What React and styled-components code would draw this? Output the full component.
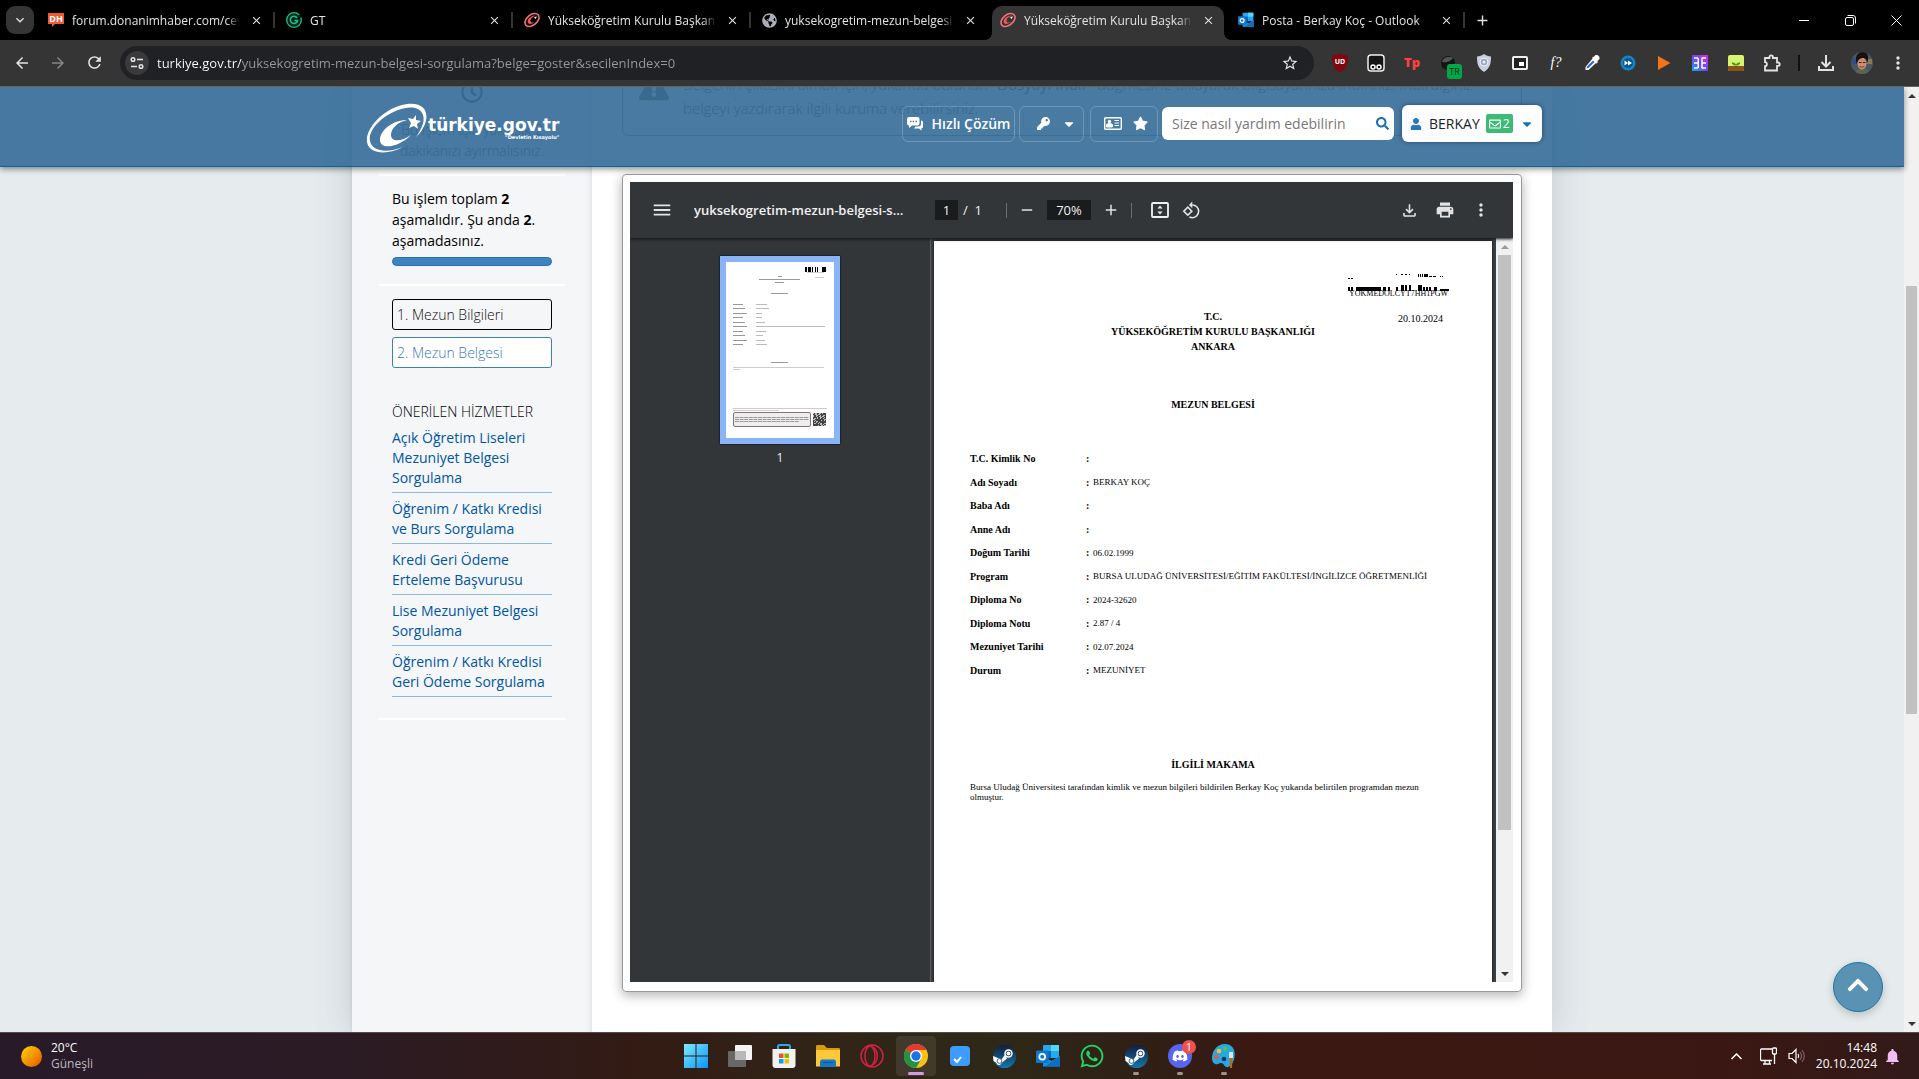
import React from "react";
import styled, { createGlobalStyle, css } from "styled-components";
import {
  FaWhatsapp, FaDiscord, FaKey, FaStar, FaSearch, FaUser, FaCaretDown,
  FaChevronUp, FaRegClock, FaExclamationTriangle, FaRegEnvelope, FaGlobeAmericas,
} from "react-icons/fa";
import {
  MdMenu, MdPrint, MdMoreVert, MdRotate90DegreesCcw, MdArrowBack, MdArrowForward, MdRefresh,
  MdStarBorder, MdOutlineFileDownload, MdAdd, MdRemove, MdClose, MdExpandMore, MdNotifications,
} from "react-icons/md";

const Global = createGlobalStyle`
  * { box-sizing: border-box; }
  html, body, #root { height: 100%; margin: 0; }
  body { overflow: hidden; font-family: "Open Sans", "Noto Sans", sans-serif; color: #000; }
  button, input { font: inherit; color: inherit; margin: 0; }
  button { border: 0; padding: 0; background: none; cursor: pointer; }
  a { text-decoration: none; }
  svg { display: block; flex: none; }
  h1, h2, p, ul, dl, dd, dt { margin: 0; padding: 0; font-weight: inherit; }
  ul { list-style: none; }
`;

const Screen = styled.div`
  display: flex;
  flex-direction: column;
  height: 100vh;
  overflow: hidden;
`;

const IconButton = styled.button`
  display: flex;
  align-items: center;
  justify-content: center;
  flex: none;
  width: ${(p) => p.$w || 36}px;
  height: ${(p) => p.$h || 34}px;
  color: ${(p) => p.$color || "#e3e3e3"};
`;

/* ---------- browser tab strip ---------- */

const TabStrip = styled.header`
  display: flex;
  flex: none;
  height: 40px;
  padding-left: 6px;
  background: #000;
  color: #e3e3e3;
  font-size: 12px;
`;

const TabSearch = styled.button`
  display: flex;
  align-items: center;
  justify-content: center;
  width: 28px;
  height: 28px;
  margin: 6px 2px 0 0;
  border-radius: 9px;
  background: #353535;
`;

const Tab = styled.div`
  position: relative;
  width: 238px;
  padding: 6px 2px 0 4px;
  ${(p) => p.$line && css`
    &::after {
      content: "";
      position: absolute;
      right: -1px;
      top: 12px;
      width: 2px;
      height: 16px;
      background: #353535;
    }
  `}
`;

const TabInner = styled.div`
  position: relative;
  display: flex;
  align-items: center;
  gap: 8px;
  height: 34px;
  padding: 0 8px 6px;
  border-radius: 10px 10px 0 0;
  ${(p) => p.$active && css`
    background: #353535;
    &::before, &::after {
      content: "";
      position: absolute;
      bottom: 0;
      width: 8px;
      height: 8px;
    }
    &::before { left: -8px; background: radial-gradient(circle at 0 0, transparent 8px, #353535 8px); }
    &::after { right: -8px; background: radial-gradient(circle at 100% 0, transparent 8px, #353535 8px); }
  `}
`;

const TabTitle = styled.button`
  flex: 1;
  min-width: 0;
  overflow: hidden;
  white-space: nowrap;
  text-align: left;
  mask-image: linear-gradient(90deg, #000 92%, transparent);
`;

const NewTab = styled(IconButton)`
  margin-top: -1px;
`;

const WindowButtons = styled.div`
  display: flex;
  margin-left: auto;
`;

/* ---------- browser toolbar ---------- */

const BrowserBar = styled.div`
  display: flex;
  align-items: center;
  flex: none;
  height: 47px;
  padding: 0 3px 1px 4px;
  background: #353535;
  border-bottom: 1px solid #6b6257;
`;

const Address = styled.div`
  display: flex;
  align-items: center;
  flex: 1;
  height: 34px;
  margin: 0 8px 0 8px;
  padding-left: 5px;
  border-radius: 17px;
  background: #202124;
`;

const SiteInfo = styled.button`
  display: flex;
  align-items: center;
  justify-content: center;
  width: 24px;
  height: 24px;
  border-radius: 12px;
  background: #3a3a3c;
`;

const AddressInput = styled.input`
  flex: 1;
  min-width: 0;
  margin-left: 8px;
  padding: 0;
  border: 0;
  outline: 0;
  font-size: 13px;
  color: transparent;
  background: linear-gradient(90deg, #fff 85px, #9a9a9a 85px);
  background-clip: text;
  -webkit-background-clip: text;
`;

const BarDivider = styled.span`
  width: 2px;
  height: 16px;
  margin: 0 8px;
  background: #111;
`;

const Avatar = styled.span`
  width: 22px;
  height: 22px;
  border-radius: 11px;
  overflow: hidden;
`;

/* ---------- page ---------- */

const Viewport = styled.div`
  position: relative;
  display: flex;
  flex: 1;
  min-height: 0;
  overflow: hidden;
  background: #e6ebee;
`;

const PageArea = styled.div`
  position: relative;
  flex: 1;
  min-width: 0;
`;

const Scrollbar = styled.div`
  display: flex;
  flex-direction: column;
  flex: none;
  width: ${(p) => p.$w}px;
  background: #f1f1f1;
`;

const ScrollArrow = styled.button`
  display: flex;
  align-items: center;
  justify-content: center;
  height: 17px;
`;

const ScrollTrack = styled.div`
  display: flex;
  flex-direction: column;
  flex: 1;
  padding: 0 2px;
`;

const ScrollThumb = styled.div`
  height: ${(p) => p.$size}%;
  background: #c1c1c1;
`;

const ScrollGap = styled.div`
  height: ${(p) => p.$size}%;
`;

const SiteHeader = styled.header`
  position: absolute;
  z-index: 2;
  inset: 0 0 auto 0;
  height: 80px;
  background: rgba(52, 107, 152, 0.9);
  border-bottom: 1px solid #0a64a0;
  box-shadow: 0 2px 6px rgba(0, 0, 0, 0.45);
`;

const HeaderInner = styled.div`
  display: flex;
  align-items: center;
  justify-content: space-between;
  width: 1200px;
  max-width: 100%;
  height: 73px;
  margin: 0 auto;
  padding: 0 10px 0 13px;
`;

const Brand = styled.a`
  display: flex;
  align-items: center;
  padding-top: 8px;
  color: #fff;
`;

const BrandText = styled.span`
  display: flex;
  flex-direction: column;
  align-items: flex-end;
  font-family: "DejaVu Sans", sans-serif;
  font-weight: bold;
  font-size: 17px;
  line-height: 18px;
`;

const BrandNote = styled.span`
  font-size: 5px;
  line-height: 6px;
`;

const HeaderTools = styled.div`
  display: flex;
  align-items: center;
`;

const ToolButton = styled.button`
  display: flex;
  align-items: center;
  justify-content: center;
  gap: ${(p) => p.$gap}px;
  width: ${(p) => p.$w}px;
  height: 36px;
  margin-right: ${(p) => p.$after}px;
  padding-left: ${(p) => p.$shift || 0}px;
  border: 1px solid rgba(255, 255, 255, 0.22);
  border-radius: 6px;
  color: #fff;
  font-size: 14px;
  font-weight: 600;
`;

const SearchBox = styled.form`
  display: flex;
  align-items: center;
  width: 232px;
  height: 33px;
  margin-right: 8px;
  padding: 0 5px 0 10px;
  border-radius: 6px;
  background: #fff;
`;

const SearchInput = styled.input`
  flex: 1;
  min-width: 0;
  padding: 0;
  border: 0;
  outline: 0;
  background: none;
  font-size: 14px;
  &::placeholder { color: #777; opacity: 1; }
`;

const UserButton = styled.button`
  display: flex;
  align-items: center;
  width: 140px;
  height: 37px;
  padding: 0 8px 0 8px;
  border-radius: 6px;
  background: #fcfdff;
  box-shadow: 0 0 4px rgba(0, 30, 70, 0.6);
  font-size: 14px;
  color: #222;
  & > :last-child { margin-left: auto; }
`;

const UserName = styled.span`
  margin: 0 6px 0 7px;
`;

const MailBadge = styled.span`
  display: flex;
  align-items: center;
  gap: 2px;
  height: 19px;
  padding: 0 3px;
  border-radius: 2px;
  background: #3dbb76;
  color: #fff;
  font-size: 12px;
`;

const Container = styled.div`
  display: flex;
  width: 1200px;
  max-width: 100%;
  height: 100%;
  margin: 0 auto;
  box-shadow: 0 0 36px rgba(70, 90, 105, 0.22);
`;

const Side = styled.aside`
  width: 240px;
  flex: none;
  padding: 0 27px;
  background: #f4f6f8;
  box-shadow: inset -8px 0 8px -8px rgba(0, 0, 0, 0.12), 0 0 4px rgba(0, 0, 0, 0.1);
  font-size: 14px;
  line-height: 21px;
`;

const SideSection = styled.section`
  padding: ${(p) => p.$pad};
  border-bottom: 2px solid #fff;
`;

const Duration = styled(SideSection)`
  display: flex;
  flex-direction: column;
  align-items: center;
  gap: 16px;
  height: 89px;
  color: #333;
  text-align: center;
  font-weight: 300;
  & > svg { margin-top: -6px; }
`;

const Progress = styled.div`
  height: 9px;
  margin-top: 6px;
  border: 1px solid #1f74b6;
  border-radius: 5px;
  background: #4083be;
`;

const StepLink = styled.a`
  display: block;
  height: 31px;
  margin-bottom: 7px;
  padding: 0 4px;
  border: 1px solid ${(p) => (p.$current ? "#3b82bd" : "#000")};
  border-radius: 3px;
  background: ${(p) => (p.$current ? "#fff" : "transparent")};
  color: ${(p) => (p.$current ? "#3b78bd" : "#111")};
  line-height: 30px;
`;

const StepText = styled.span`
  font-weight: 300;
`;

const SideHeading = styled.h2`
  margin-top: 33px;
  padding-bottom: 6px;
  font-size: 14px;
  font-weight: 300;
`;

const Suggestion = styled.a`
  display: block;
  margin-bottom: 6px;
  padding-bottom: 4px;
  border-bottom: 1px solid #8db8dd;
  color: #0055a3;
  line-height: 20px;
`;

const Main = styled.main`
  flex: 1;
  min-width: 0;
  padding: 0 30px;
  background: #fff;
`;

const Notice = styled.div`
  display: flex;
  gap: 14px;
  height: 65px;
  margin-top: -16px;
  padding: 0 16px;
  border: 1px solid #8b8b86;
  border-radius: 6px;
  color: #333;
  font-size: 15px;
  font-weight: 300;
  line-height: 24px;
`;

const Viewer = styled.div`
  margin-top: 38px;
  height: 818px;
  padding: 7px 8px 8px 7px;
  border: 1px solid #9b9b9b;
  border-radius: 4px;
  box-shadow: 0 3px 12px rgba(0, 0, 0, 0.32);
`;

const Pdf = styled.div`
  display: flex;
  flex-direction: column;
  height: 800px;
  overflow: hidden;
  background: #323639;
  color: #f1f1f1;
`;

const PdfBar = styled.div`
  position: relative;
  z-index: 1;
  display: flex;
  align-items: center;
  flex: none;
  height: 56px;
  padding: 0 14px;
  box-shadow: 0 1px 3px #111;
  font-size: 13px;
`;

const PdfTitle = styled.h1`
  width: 215px;
  margin: 0 26px 0 14px;
  overflow: hidden;
  white-space: nowrap;
  text-overflow: ellipsis;
  font-size: 13px;
  font-weight: 600;
`;

const PdfField = styled.input`
  width: ${(p) => p.$w}px;
  height: 20px;
  padding: 0;
  border: 0;
  background: #191b1c;
  text-align: center;
`;

const PageCount = styled.span`
  margin: 0 24px 0 5px;
  white-space: pre;
`;

const PdfDivider = styled.span`
  width: 1px;
  height: 15px;
  background: #6b6e70;
`;

const ViewTools = styled.div`
  display: flex;
  gap: 14px;
  margin-left: 19px;
`;

const PdfRight = styled.div`
  display: flex;
  margin-left: auto;
`;

const PdfBody = styled.div`
  display: flex;
  flex: 1;
  min-height: 0;
`;

const Thumbs = styled.nav`
  display: flex;
  flex-direction: column;
  align-items: center;
  width: 300px;
  flex: none;
  padding-top: 18px;
  font-size: 12px;
  line-height: 16px;
`;

const Thumb = styled.button`
  padding: 6px;
  margin-bottom: 6px;
  background: #8ab4f8;
  box-shadow: 0 0 2px #000;
`;

const DocArea = styled.div`
  display: flex;
  flex: 1;
  min-width: 0;
  padding: 3px 4px 0 3px;
  border-left: 1px solid #5a5e61;
  background: #3d4246;
`;

const Sheet = styled.article`
  flex: 1;
  min-width: 0;
  padding: 33px 43px 0 36px;
  background: #fff;
  box-shadow: 0 0 3px #0b0d14;
  color: #000;
  font-family: "Liberation Serif", serif;
  font-size: 9px;
`;

const DocHead = styled.div`
  display: grid;
  grid-template-columns: 1fr auto 1fr;
  padding-left: 7px;
`;

const DocTitle = styled.h2`
  grid-column: 2;
  margin-top: ${(p) => p.$top}px;
  font-size: 10px;
  font-weight: bold;
  line-height: 15px;
  text-align: center;
`;

const CodeBlock = styled.div`
  display: flex;
  flex-direction: column;
  justify-self: end;
  align-items: center;
  line-height: 10px;
`;

const Code = styled.span`
  margin-top: -2px;
  font-size: 8px;
`;

const DocDate = styled.span`
  align-self: flex-end;
  margin: 15px 6px 0 0;
  font-size: 10px;
`;

const Centered = styled.div`
  padding-left: 7px;
`;

const Facts = styled.dl`
  display: grid;
  grid-auto-rows: 1fr;
  height: 235px;
  margin-top: 35px;
`;

const Fact = styled.div`
  display: grid;
  grid-template-columns: 116px 7px 1fr;
  align-items: center;
  white-space: nowrap;
  & dt, & b { font-size: 10px; font-weight: bold; }
`;

const Statement = styled.p`
  margin-top: 10px;
  line-height: 10px;
`;

const ToTop = styled.button`
  position: absolute;
  z-index: 3;
  right: 21px;
  bottom: 20px;
  display: flex;
  align-items: center;
  justify-content: center;
  width: 50px;
  height: 50px;
  padding-bottom: 4px;
  border: 1px solid #1878a5;
  border-radius: 25px;
  background: #5a92b4;
  box-shadow: 0 3px 8px rgba(0, 0, 0, 0.2);
  color: #fff;
`;

/* ---------- taskbar ---------- */

const Taskbar = styled.footer`
  display: grid;
  grid-template-columns: 1fr auto 1fr;
  align-items: center;
  flex: none;
  height: 47px;
  padding-left: 1px;
  border-top: 1px solid #554a4a;
  background: linear-gradient(90deg, #281a29 0%, #2b1b24 18%, #331b14 33%, #302517 44%, #2e2818 52%, #301f15 60%, #3b1812 66%, #3a1712 90%, #321a1a 100%);
  color: #fff;
  font-size: 12px;
  line-height: 16px;
`;

const Weather = styled.button`
  display: flex;
  align-items: center;
  gap: 9px;
  justify-self: start;
  padding-left: 20px;
  text-align: left;
`;

const Sun = styled.span`
  width: 21px;
  height: 21px;
  border-radius: 11px;
  background: linear-gradient(135deg, #ffd400, #f08a00 60%, #dd5500);
`;

const Stack = styled.span`
  display: flex;
  flex-direction: column;
`;

const Muted = styled.span`
  color: #bdb8bd;
`;

const Apps = styled.div`
  display: flex;
  gap: 4px;
`;

const AppButton = styled.button`
  position: relative;
  display: flex;
  align-items: center;
  justify-content: center;
  width: 40px;
  height: 40px;
  border-radius: 4px;
  background: ${(p) => (p.$mark === "active" ? "rgba(255,255,255,0.09)" : "none")};
  ${(p) => p.$mark && css`
    &::after {
      content: "";
      position: absolute;
      bottom: 1px;
      width: ${p.$mark === "active" ? 16 : 6}px;
      height: 3px;
      border-radius: 2px;
      background: ${p.$mark === "active" ? "#d79be6" : "#9d9690"};
    }
  `}
`;

const Count = styled.span`
  position: absolute;
  top: 4px;
  right: 4px;
  width: 14px;
  height: 14px;
  border-radius: 7px;
  background: #f0504f;
  font-size: 11px;
  line-height: 14px;
`;

const Tray = styled.div`
  display: flex;
  align-items: center;
  justify-self: end;
  padding-right: 18px;
`;

const Clock = styled.button`
  display: flex;
  flex-direction: column;
  align-items: flex-end;
  margin: 0 7px 0 11px;
`;

/* ---------- drawings ---------- */

const Crescent = ({ size = 16 }) => (
  <svg width={size} height={size} viewBox="0 0 16 16">
    <ellipse cx="8" cy="8" rx="8" ry="5.2" transform="rotate(-40 8 8)" fill="none" stroke="#f0747a" strokeWidth="1.6" />
    <path d="M12 3.6C8 3 4 6.500 3.600 9.500c-.3 3 4 3.200 7.400.6-3 .9-4.900.2-4.500-1.700.4-2 2.500-4 5.500-4.800z" fill="#f5555d" />
    <path d="M10 5l3-.5-1.600 2.500z" fill="#fff" />
  </svg>
);

const DhIcon = () => (
  <svg width="16" height="16" viewBox="0 0 16 16">
    <path d="M0 1h16v11h-9l-3 3v-3H0z" fill="#ee5a36" />
    <text x="8" y="10" fontSize="9" fontWeight="bold" textAnchor="middle" fill="#fff">DH</text>
  </svg>
);

const GIcon = () => (
  <svg width="16" height="16" viewBox="0 0 16 16">
    <circle cx="8" cy="8" r="7.300" fill="#04231b" stroke="#12c48b" strokeWidth="1.300" strokeDasharray="40 3" />
    <path d="M11 6A3.600 3.600 0 1 0 11.500 8.500H8.500" fill="none" stroke="#12c48b" strokeWidth="1.600" />
  </svg>
);

const OutlookIcon = ({ size = 16 }) => (
  <svg width={size} height={size} viewBox="0 0 24 24">
    <rect x="7" y="1" width="16" height="13" rx="1" fill="#28a8ea" />
    <path d="M15 1h8v6h-8z" fill="#50d9ff" />
    <path d="M7 7h8v7H7z" fill="#0364b8" />
    <path d="M7 12l8.500 5 8.500-5v10.500H7z" fill="#1490df" />
    <path d="M24 12v10.500H9z" fill="#0f6fc0" />
    <rect x="0" y="6.500" width="12.500" height="12.500" rx="1" fill="#0f78d4" />
    <circle cx="6.200" cy="12.700" r="2.900" fill="none" stroke="#fff" strokeWidth="1.800" />
  </svg>
);

const Logo = () => (
  <svg width="63" height="50" viewBox="0 0 63 50">
    <path fillRule="evenodd" d="M38 44C24 52 4 52 2 39 0 25 20 4 42 1c18-2 22 9 18 20-3 7-6 10-9 13 6-9 9-16 7-22C55 3 44 3 33 7 15 14 3 28 5 38c2 11 18 12 33 6z" fill="#fff" />
    <path d="M42 17c-14 0-27 10-27 20 0 10 18 8 31-5-10 7-20 7-20 0s7-13 16-15z" fill="#fff" />
    <path d="M43 15l5 1 3-4v5l5 1-4 3 1 5-4-3-5 2 2-5z" fill="#fff" />
  </svg>
);

const extensionIcons = [
  ["uBlock", <svg width="18" height="20" viewBox="0 0 18 20"><path d="M9 0c3 2 5 2.500 8 2.500 0 9-1 13-8 17-7-4-8-8-8-17C4 2.500 6 2 9 0z" fill="#800610" /><text x="9" y="11" fontSize="7" fontWeight="bold" textAnchor="middle" fill="#fff">UD</text></svg>],
  ["Tampermonkey", <svg width="18" height="18" viewBox="0 0 18 18"><rect x="1" y="1" width="16" height="16" rx="3" fill="#151515" stroke="#eee" strokeWidth="1.500" /><circle cx="6" cy="13" r="2" fill="none" stroke="#fff" strokeWidth="1.500" /><circle cx="12" cy="13" r="2" fill="none" stroke="#fff" strokeWidth="1.500" /></svg>],
  ["TP", <svg width="18" height="18" viewBox="0 0 18 18"><text x="9" y="13" fontSize="13" fontWeight="800" textAnchor="middle" fill="#ff4040">Tp</text></svg>],
  ["TR", <svg width="34" height="32" viewBox="-8 -8 34 32"><circle cx="9" cy="8" r="7" fill="#141414" /><path d="M3 7a7 6 0 0 1 11-4c-3 4-7 5-11 4z" fill="#555" /><rect x="8" y="9" width="15" height="15" rx="3" fill="#00a848" /><text x="15.500" y="20" fontSize="9" textAnchor="middle" fill="#062b14">TR</text></svg>],
  ["Shield", <svg width="16" height="18" viewBox="0 0 16 18"><path d="M8 0c3 2 4 2 7 2.500C15 10 14 14 8 18 2 14 1 10 1 2.500 4 2 5 2 8 0z" fill="#c8cfdf" /><circle cx="8" cy="8" r="4" fill="#9da7bf" stroke="#f3f5fa" /><circle cx="8" cy="8" r="1.500" fill="#eef" /></svg>],
  ["Picture", <svg width="16" height="14" viewBox="0 0 16 14"><rect width="16" height="14" rx="2" fill="#eee" /><rect x="2" y="2" width="12" height="10" fill="#222" /><rect x="7" y="6" width="5" height="4" fill="#fff" /></svg>],
  ["Font", <svg width="18" height="18" viewBox="0 0 18 18"><text x="9" y="13" fontSize="14" fontStyle="italic" fontFamily="Liberation Serif" textAnchor="middle" fill="#fff">f?</text></svg>],
  ["Picker", <svg width="16" height="16" viewBox="0 0 16 16"><path d="M9 3l4 4-8.500 8H1.500v-3z" fill="#fff" /><path d="M9 5.500l1.500 1.500-6 6-2 .5.500-2z" fill="#3263d6" /><path d="M8 2.500l1.500-.5 2-2c2-.5 4.500 1 4 4l-2 2 0 2-1.500.5z" fill="#fff" /></svg>],
  ["Forward", <svg width="16" height="16" viewBox="0 0 16 16"><circle cx="8" cy="8" r="7.500" fill="#1386c6" /><circle cx="8" cy="8" r="5" fill="#09538f" /><path d="M4.500 5.500L8 8l-3.500 2.500zM8 5.500L12 8l-4 2.500z" fill="#fff" /></svg>],
  ["Play", <svg width="14" height="14" viewBox="0 0 14 14"><path d="M1 0l12.500 7L1 14z" fill="#f4731d" /></svg>],
  ["Translate", <svg width="16" height="16" viewBox="0 0 16 16"><defs><linearGradient id="tr" x1="0" y1="1" x2="1" y2="0"><stop offset="0" stopColor="#18a9f5" /><stop offset=".5" stopColor="#6a48f2" /><stop offset="1" stopColor="#e62be0" /></linearGradient></defs><rect width="16" height="16" fill="url(#tr)" /><path d="M2 3h4M2 8h4M2 13h4M9.500 3H14M9.500 8H14M9.500 13H14M6.200 3v10M10 3v10" stroke="#fff" strokeWidth="1.500" /></svg>],
  ["Plant", <svg width="16" height="16" viewBox="0 0 16 16"><rect width="16" height="16" rx="2" fill="#d6f56f" /><path d="M0 11h16v3a2 2 0 0 1-2 2H2a2 2 0 0 1-2-2z" fill="#8a5418" /><path d="M8 10c-1-2-2-2-4-2 1 2 2 2 4 2 1-2 2-2 4-2-1 2-2 2-4 2" stroke="#4a9a1e" fill="#4a9a1e" /></svg>],
];

const Puzzle = () => (
  <svg width="18" height="18" viewBox="0 0 18 18" fill="none" stroke="#e3e3e3" strokeWidth="1.800">
    <path d="M2 4h4.500V3a1.700 1.700 0 0 1 3.400 0v1H14v4.500h1a1.700 1.700 0 0 1 0 3.400h-1V16.500H2v-4.300c2.500 0 2.500-4 0-4z" />
  </svg>
);

const Face = () => (
  <svg width="22" height="22" viewBox="0 0 22 22">
    <rect width="22" height="22" fill="#4b5665" />
    <path d="M1 6h5v6H1z" fill="#314d8c" />
    <path d="M16 7h5v5h-5z" fill="#8a7a50" />
    <path d="M4 22c1-5 4-6 7-6s7 1 8 6z" fill="#5a6550" />
    <ellipse cx="11" cy="11.500" rx="4.500" ry="6" fill="#c98f72" />
    <path d="M5.500 12C3.500 3 7 0 12 0c5 0 6 4 4.500 11-1-4-2-5-5-5-2.500 0-5 2-6 6z" fill="#19110e" />
    <path d="M8 10.500h2.500M12 10.500h2.500" stroke="#3a1d15" />
    <path d="M8.500 14.500q2.500 1.500 5 0" stroke="#803d35" fill="none" />
  </svg>
);

const Triangle = ({ down, color = "#333" }) => (
  <svg width="8" height="4" viewBox="0 0 8 4"><path d={down ? "M0 0h8L4 4z" : "M0 4h8L4 0z"} fill={color} /></svg>
);

const bars = [0, 3, 8, 11, 14, 17, 20, 23, 26, 29, 31, 35, 40, 48, 53, 57, 61, 70, 72, 75, 78, 81, 86, 92, 95, 98];
const Barcode = () => (
  <svg width="101" height="17" viewBox="0 0 101 17">
    {bars.map((x) => {
      const tall = x > 50 && x < 73;
      const low = x > 90;
      return <rect key={x} x={x} y={low ? 15 : tall ? 11 : 13} width={x % 3 === 2 ? 3 : 2} height={low ? 2 : tall ? 6 : 4} />;
    })}
    <path d="M0 4h2v1H0zM3 4h2v1H3zM48 0h1v1h-1zM53 0h2v1h-2zM57 0h2v1h-2zM61 0h1v1h-1zM70 0h1v3h-1zM72 0h1v3h-1zM74 0h1v3h-1zM76 0h4v3h-4zM81 2h3v1h-3zM85 2h3v1h-3zM92 2h1v1h-1zM94 2h1v1h-1z" />
  </svg>
);

const thumbRows = [42, 46, 51, 55, 60, 64, 69, 73, 78, 82];
const thumbValues = [11, 13, 6, 6, 9, 69, 10, 7, 9, 11];
const ThumbArt = () => (
  <svg width="108" height="176" viewBox="0 0 108 176">
    <rect width="108" height="176" fill="#fff" />
    <path d="M79 5h2v5h-2zM82 5h3v5h-3zM86 5h1v5h-1zM89 5h1v5h-1zM91 5h1v5h-1zM96 5h4v5h-4z" />
    <g stroke="#999">
      <path d="M52 14.500h4M33 17.500h41M49 20.500h9M45 31.500h17M45 100.500h17" />
      <path d="M81 10.500h17M89 15.500h9M7 105.500h91M7 107.500h7M7 146.500h94M7 148.500h46" stroke="#ccc" />
      {thumbRows.map((y, i) => (
        <React.Fragment key={y}>
          <path d={`M7 ${y + 0.5}h${10 + (i % 3) * 2}`} />
          <path d={`M30 ${y + 0.5}h${thumbValues[i]}`} stroke="#bbb" />
        </React.Fragment>
      ))}
    </g>
    <rect x="7.500" y="150.500" width="77" height="14" rx="1.500" fill="#eee" stroke="#8a7070" />
    <path d="M9 155.500h74M9 157.500h74M9 159.500h64" stroke="#999" strokeDasharray="4 .6" />
    <rect x="87" y="151" width="13" height="13" fill="#bbb" />
    {Array.from({ length: 169 }, (_, i) =>
      (i * 7 + (i % 5) * (i % 11)) % 3 !== 0 ? (
        <rect key={i} x={87 + (i % 13)} y={151 + Math.floor(i / 13)} width="1" height="1" fill="#444" />
      ) : null
    )}
  </svg>
);

const IdCard = () => (
  <svg width="18" height="13" viewBox="0 0 18 13">
    <rect x=".7" y=".7" width="16.600" height="11.600" rx="1" fill="none" stroke="#fff" strokeWidth="1.400" />
    <circle cx="5.500" cy="4.500" r="1.700" fill="#fff" />
    <path d="M2.500 10V8c0-2 6-2 6 0v2zM10.500 3.500H15M10.500 6H15M10.500 8.500H15" stroke="#fff" fill="#fff" />
  </svg>
);

const Chat = () => (
  <svg width="16" height="14" viewBox="0 0 16 14">
    <path d="M2 0h8.500a2 2 0 0 1 2 2v4.500a2 2 0 0 1-2 2H5L2 11V8.500a2 2 0 0 1-2-2V2a2 2 0 0 1 2-2z" fill="#fff" />
    <path d="M14 3.500c1.500 0 2 1 2 2v4c0 1-.5 1.500-1.500 1.500v2.500L12 11.500H7l1.500-2H11c2 0 3-1 3-2.500z" fill="#fff" />
    <path d="M3 4.500h1.500M5.700 4.500h1.500M8.500 4.500H10" stroke="#47799f" strokeWidth="1.500" />
  </svg>
);

const FitPage = () => (
  <svg width="18" height="16" viewBox="0 0 18 16">
    <rect x="1" y="1" width="16" height="14" rx="1" fill="none" stroke="#f1f1f1" strokeWidth="1.800" />
    <path d="M6.500 6.500h5L9 3.500zM6.500 9.500h5L9 12.500z" fill="#f1f1f1" />
  </svg>
);

const WindowsIcon = () => (
  <svg width="24" height="24" viewBox="0 0 24 24">
    <defs><linearGradient id="win" x1="0" y1="0" x2="1" y2="1"><stop offset="0" stopColor="#7ceaff" /><stop offset="1" stopColor="#0a95f5" /></linearGradient></defs>
    <path d="M0 0h11.500v11.500H0zM12.500 0H24v11.500H12.500zM0 12.500h11.500V24H0zM12.500 12.500H24V24H12.500z" fill="url(#win)" />
  </svg>
);
const TaskViewIcon = () => (
  <svg width="24" height="22" viewBox="0 0 24 22"><rect x="7" width="17" height="15" rx="1" fill="#f4f4f4" /><rect y="6" width="18" height="16" rx="1" fill="#686868" /><path d="M7 6h11v9H7z" fill="#b8b8b8" /></svg>
);
const StoreIcon = () => (
  <svg width="24" height="24" viewBox="0 0 24 24"><path d="M6 7V2.500C6 1.500 6.500 1 7.500 1h9c1 0 1.500.5 1.500 1.500V7" fill="none" stroke="#29a9e8" strokeWidth="2" /><path d="M.5 5h23v16a3 3 0 0 1-3 3h-17a3 3 0 0 1-3-3z" fill="#f1f1f1" /><path d="M7 9.500h4.500V14H7z" fill="#f25022" /><path d="M12.500 9.500H17V14h-4.500z" fill="#7fba00" /><path d="M7 15h4.500v4.500H7z" fill="#00a4ef" /><path d="M12.500 15H17v4.500h-4.500z" fill="#ffb900" /></svg>
);
const FolderIcon = () => (
  <svg width="24" height="24" viewBox="0 0 24 24"><path d="M0 2.500C0 1.500.5 1 1.500 1H8l3 3h11.500c1 0 1.500.5 1.500 1.500V8H0z" fill="#d99a10" /><path d="M0 6h24v16.500H0z" fill="#fcc938" /><path d="M4 23v-5.500c0-1 1-2 2-2h12c1 0 2 1 2 2V23z" fill="#1479c9" /><path d="M7 18.500h10" stroke="#0b5297" /></svg>
);
const OperaIcon = () => (
  <svg width="24" height="24" viewBox="0 0 24 24" fill="none" stroke="#d81f45" strokeWidth="1.500"><circle cx="12" cy="12" r="11" /><ellipse cx="10" cy="12" rx="5" ry="10" /><path d="M12 3c7 3 7 15 0 18" /></svg>
);
const ChromeIcon = () => (
  <svg width="24" height="24" viewBox="0 0 24 24">
    <circle cx="12" cy="12" r="12" fill="#fbc116" />
    <path d="M12 12L1.600 6A12 12 0 0 1 22.400 6z" fill="#e33b2e" />
    <path d="M1.600 6A12 12 0 0 0 12 24l5.200-9L12 12z" fill="#229342" />
    <path d="M12 6h10.400L17 15z" fill="#fbc116" />
    <circle cx="12" cy="12" r="6" fill="#fff" />
    <circle cx="12" cy="12" r="4.700" fill="#1a73e8" />
  </svg>
);
const TodoIcon = () => (
  <svg width="20" height="20" viewBox="0 0 20 20"><rect width="20" height="20" rx="4" fill="#3f9cff" /><path d="M4 13l3 3 4-5" fill="none" stroke="#fff" strokeWidth="2" /></svg>
);
const Disc = styled.span`
  display: flex;
  align-items: center;
  justify-content: center;
  width: 24px;
  height: 24px;
  border-radius: 50%;
  background: #5865f2;
`;
const SteamIcon = () => (
  <svg width="23" height="23" viewBox="0 0 23 23">
    <defs><linearGradient id="st" x1="0" y1="0" x2="0" y2="1"><stop offset="0" stopColor="#151d3c" /><stop offset="1" stopColor="#1277ae" /></linearGradient></defs>
    <circle cx="11.500" cy="11.500" r="11.500" fill="url(#st)" />
    <path d="M0 11l8.500 3.500L12 9.500l2 4-5.500 4.500c-1 3-4.500 2.500-5 0L.5 16z" fill="#fff" />
    <circle cx="15.500" cy="8.500" r="4.200" fill="#fff" />
    <circle cx="15.500" cy="8.500" r="2.700" fill="#1b335b" /><circle cx="15.500" cy="8.500" r="2" fill="#fff" />
    <circle cx="6.500" cy="16" r="2.400" fill="#fff" stroke="#18456f" strokeWidth=".8" />
  </svg>
);
const PaintIcon = () => (
  <svg width="24" height="24" viewBox="0 0 24 24"><path d="M13 0C5 0 0 7 0 14c0 5 3 7 6 6 3-2 5-1 6 1 2 4 7 2 9-3 4-9 1-18-8-18z" fill="#27a7e4" /><circle cx="7" cy="7" r="2.300" fill="#f4c430" /><circle cx="13" cy="4.500" r="2.300" fill="#4cc351" /><circle cx="4.500" cy="13" r="2.300" fill="#ed5b37" /><circle cx="12" cy="15" r="2.300" fill="#163a62" /><path d="M17.500 14h3l-.5 10h-2z" fill="#b66a1d" /><path d="M17 8h4v6h-4z" fill="#dfe4e8" /></svg>
);

const NetIcon = () => (
  <svg width="17" height="18" viewBox="0 0 17 18" fill="none" stroke="#fff" strokeWidth="1.300"><path d="M12 2H1.500a1 1 0 0 0-1 1v9.500a1 1 0 0 0 1 1H12M5 13.500V17M9.500 13.500V17M3 17h8M14.500 7v10" /><rect x="12.500" y="1" width="4" height="6" rx="1" /></svg>
);
const VolumeIcon = () => (
  <svg width="18" height="16" viewBox="0 0 18 16" fill="none" stroke="#fff" strokeWidth="1.200"><path d="M1 5.500h3l4-4v13l-4-4H1z" /><path d="M10 6q1.500 2 0 4" /><path d="M12 4q3 4 0 8M14 2q4.500 6 0 12" stroke="#7d6562" /></svg>
);

/* ---------- data ---------- */

const tabs = [
  { title: "forum.donanimhaber.com/cevapla", icon: <DhIcon />, line: true },
  { title: "GT", icon: <GIcon />, line: true },
  { title: "Yükseköğretim Kurulu Başkanlığı", icon: <Crescent />, line: true },
  { title: "yuksekogretim-mezun-belgesi-sorgulama", icon: <FaGlobeAmericas size={15} color="#aab0ba" /> },
  { title: "Yükseköğretim Kurulu Başkanlığı", icon: <Crescent />, active: true },
  { title: "Posta - Berkay Koç - Outlook", icon: <OutlookIcon />, line: true },
];

const suggestions = [
  "Açık Öğretim Liseleri Mezuniyet Belgesi Sorgulama",
  "Öğrenim / Katkı Kredisi ve Burs Sorgulama",
  "Kredi Geri Ödeme Erteleme Başvurusu",
  "Lise Mezuniyet Belgesi Sorgulama",
  "Öğrenim / Katkı Kredisi Geri Ödeme Sorgulama",
];

const facts = [
  ["T.C. Kimlik No", ""],
  ["Adı Soyadı", "BERKAY KOÇ"],
  ["Baba Adı", ""],
  ["Anne Adı", ""],
  ["Doğum Tarihi", "06.02.1999"],
  ["Program", "BURSA ULUDAĞ ÜNİVERSİTESİ/EĞİTİM FAKÜLTESİ/İNGİLİZCE ÖĞRETMENLİĞİ"],
  ["Diploma No", "2024-32620"],
  ["Diploma Notu", "2.87 / 4"],
  ["Mezuniyet Tarihi", "02.07.2024"],
  ["Durum", "MEZUNİYET"],
];

const apps = [
  ["Başlat", <WindowsIcon />],
  ["Görev görünümü", <TaskViewIcon />],
  ["Store", <StoreIcon />],
  ["Dosya Gezgini", <FolderIcon />],
  ["Opera", <OperaIcon />],
  ["Chrome", <ChromeIcon />, "active"],
  ["To Do", <TodoIcon />],
  ["Steam", <SteamIcon />],
  ["Outlook", <OutlookIcon size={24} />],
  ["WhatsApp", <FaWhatsapp size={26} color="#25d366" />],
  ["Steam oyun", <SteamIcon />, "open"],
  ["Discord", <><Disc><FaDiscord size={16} color="#fff" /></Disc><Count>1</Count></>, "open"],
  ["Paint", <PaintIcon />, "open"],
];

export default function App() {
  return (
    <Screen>
      <Global />
      <TabStrip>
        <TabSearch aria-label="Sekme ara"><MdExpandMore size={16} /></TabSearch>
        {tabs.map((t, i) => (
          <Tab key={i} $line={t.line}>
            <TabInner $active={t.active}>
              {t.icon}
              <TabTitle>{t.title}</TabTitle>
              <IconButton $w={16} $h={16} aria-label="Sekmeyi kapat"><MdClose size={13} /></IconButton>
            </TabInner>
          </Tab>
        ))}
        <NewTab $h={42} aria-label="Yeni sekme"><MdAdd size={17} /></NewTab>
        <WindowButtons>
          <IconButton $w={46} $h={40} aria-label="Küçült"><svg width="10" height="10"><path d="M0 5.500h10" stroke="#fff" /></svg></IconButton>
          <IconButton $w={46} $h={40} aria-label="Geri yükle">
            <svg width="11" height="11" fill="none" stroke="#fff"><rect x=".5" y="2.500" width="8" height="8" rx="1.500" /><path d="M2.500.5H8a2.500 2.500 0 0 1 2.500 2.500v5.500" /></svg>
          </IconButton>
          <IconButton $w={46} $h={40} aria-label="Kapat"><svg width="11" height="11"><path d="M.5.5l10 10M10.500.5l-10 10" stroke="#fff" /></svg></IconButton>
        </WindowButtons>
      </TabStrip>

      <BrowserBar>
        <IconButton aria-label="Geri"><MdArrowBack size={18} /></IconButton>
        <IconButton aria-label="İleri" $color="#858585"><MdArrowForward size={18} /></IconButton>
        <IconButton aria-label="Yenile"><MdRefresh size={19} /></IconButton>
        <Address>
          <SiteInfo aria-label="Site bilgileri">
            <svg width="14" height="14" viewBox="0 0 14 14" fill="none" stroke="#e3e3e3" strokeWidth="1.500"><circle cx="3" cy="3.500" r="1.800" /><path d="M7 3.500h6M1 10.500h6" /><circle cx="11" cy="10.500" r="1.800" /></svg>
          </SiteInfo>
          <AddressInput aria-label="Adres" defaultValue="turkiye.gov.tr/yuksekogretim-mezun-belgesi-sorgulama?belge=goster&secilenIndex=0" />
          <IconButton $w={48} aria-label="Yer işareti"><MdStarBorder size={18} /></IconButton>
        </Address>
        {extensionIcons.map(([name, icon]) => <IconButton key={name} aria-label={name}>{icon}</IconButton>)}
        <IconButton aria-label="Uzantılar"><Puzzle /></IconButton>
        <BarDivider />
        <IconButton aria-label="İndirilenler">
          <svg width="16" height="16" viewBox="0 0 16 16" fill="none" stroke="#e3e3e3" strokeWidth="2"><path d="M8 0v11M3.500 7L8 11.500 12.500 7M1 11v4h14v-4" /></svg>
        </IconButton>
        <IconButton aria-label="Profil"><Avatar><Face /></Avatar></IconButton>
        <IconButton aria-label="Menü"><MdMoreVert size={20} /></IconButton>
      </BrowserBar>

      <Viewport>
        <PageArea>
          <SiteHeader>
            <HeaderInner>
              <Brand href="#" aria-label="türkiye.gov.tr">
                <Logo />
                <BrandText>türkiye.gov.tr<BrandNote>"Devletin Kısayolu"</BrandNote></BrandText>
              </Brand>
              <HeaderTools>
                <ToolButton $w={113} $gap={9} $after={4}><Chat />Hızlı Çözüm</ToolButton>
                <ToolButton $w={65} $gap={12} $after={6} $shift={10} aria-label="Erişim"><FaKey size={13} /><FaCaretDown size={14} /></ToolButton>
                <ToolButton $w={68} $gap={11} $after={4} $shift={4} aria-label="Kartım"><IdCard /><FaStar size={15} /></ToolButton>
                <SearchBox>
                  <SearchInput aria-label="Ara" placeholder="Size nasıl yardım edebilirin" />
                  <IconButton $w={14} $h={30} $color="#1d6fb5" type="button" aria-label="Ara"><FaSearch size={13} /></IconButton>
                </SearchBox>
                <UserButton>
                  <FaUser size={12} color="#2777bb" />
                  <UserName>BERKAY</UserName>
                  <MailBadge><FaRegEnvelope size={12} />2</MailBadge>
                  <FaCaretDown size={14} color="#1d6fb5" />
                </UserButton>
              </HeaderTools>
            </HeaderInner>
          </SiteHeader>

          <Container>
            <Side>
              <Duration $pad="0">
                <FaRegClock size={22} />
                <p>Bu işlem için yaklaşık 2 dakikanızı ayırmalısınız.</p>
              </Duration>
              <SideSection $pad="12px 13px 18px">
                <p>Bu işlem toplam <b>2</b> aşamalıdır. Şu anda <b>2</b>. aşamadasınız.</p>
                <Progress role="progressbar" aria-label="Aşama" aria-valuenow="100" />
              </SideSection>
              <SideSection $pad="13px 13px 15px">
                <StepLink href="#"><StepText>1. Mezun Bilgileri</StepText></StepLink>
                <StepLink href="#" $current><StepText>2. Mezun Belgesi</StepText></StepLink>
                <SideHeading>ÖNERİLEN HİZMETLER</SideHeading>
                <ul>{suggestions.map((s) => <li key={s}><Suggestion href="#">{s}</Suggestion></li>)}</ul>
              </SideSection>
            </Side>
            <Main>
              <Notice>
                <FaExclamationTriangle size={30} color="#6b5a30" />
                <p>Belgenin çıktısını almak için, yukarıda bulunan "<b>Dosyayı İndir</b>" düğmesine tıklayarak bilgisayarınıza indiriniz. İndirdiğiniz belgeyi yazdırarak ilgili kuruma verebilirsiniz.</p>
              </Notice>
              <Viewer>
                <Pdf>
                  <PdfBar>
                    <IconButton aria-label="Kenar çubuğu"><MdMenu size={22} /></IconButton>
                    <PdfTitle>yuksekogretim-mezun-belgesi-sorgulama</PdfTitle>
                    <PdfField $w={23} aria-label="Sayfa" defaultValue="1" />
                    <PageCount>/  1</PageCount>
                    <PdfDivider />
                    <IconButton $w={40} aria-label="Uzaklaştır"><MdRemove size={18} /></IconButton>
                    <PdfField $w={44} aria-label="Yakınlaştırma" defaultValue="70%" />
                    <IconButton $w={40} aria-label="Yakınlaştır"><MdAdd size={18} /></IconButton>
                    <PdfDivider />
                    <ViewTools>
                      <IconButton $w={18} aria-label="Sayfaya sığdır"><FitPage /></IconButton>
                      <IconButton $w={18} aria-label="Döndür"><MdRotate90DegreesCcw size={19} /></IconButton>
                    </ViewTools>
                    <PdfRight>
                      <IconButton aria-label="İndir"><MdOutlineFileDownload size={19} /></IconButton>
                      <IconButton aria-label="Yazdır"><MdPrint size={20} /></IconButton>
                      <IconButton aria-label="Diğer"><MdMoreVert size={20} /></IconButton>
                    </PdfRight>
                  </PdfBar>
                  <PdfBody>
                    <Thumbs>
                      <Thumb aria-label="Sayfa 1"><ThumbArt /></Thumb>
                      1
                    </Thumbs>
                    <DocArea>
                      <Sheet>
                        <DocHead>
                          <DocTitle $top={35}>T.C.<br />YÜKSEKÖĞRETİM KURULU BAŞKANLIĞI<br />ANKARA</DocTitle>
                          <CodeBlock>
                            <Barcode />
                            <Code>YOKMEDOLCYT7HH1PGW</Code>
                            <DocDate>20.10.2024</DocDate>
                          </CodeBlock>
                        </DocHead>
                        <Centered><DocTitle $top={43}>MEZUN BELGESİ</DocTitle></Centered>
                        <Facts>
                          {facts.map(([k, v]) => <Fact key={k}><dt>{k}</dt><b>:</b><dd>{v}</dd></Fact>)}
                        </Facts>
                        <Centered><DocTitle $top={75}>İLGİLİ MAKAMA</DocTitle></Centered>
                        <Statement>Bursa Uludağ Üniversitesi tarafından kimlik ve mezun bilgileri bildirilen Berkay Koç yukarıda belirtilen programdan mezun olmuştur.</Statement>
                      </Sheet>
                    </DocArea>
                    <Scrollbar $w={17}>
                      <ScrollArrow aria-label="Yukarı"><Triangle color="#999" /></ScrollArrow>
                      <ScrollTrack><ScrollThumb $size={81} /></ScrollTrack>
                      <ScrollArrow aria-label="Aşağı"><Triangle down /></ScrollArrow>
                    </Scrollbar>
                  </PdfBody>
                </Pdf>
              </Viewer>
            </Main>
          </Container>
          <ToTop aria-label="Başa dön"><FaChevronUp size={24} /></ToTop>
        </PageArea>
        <Scrollbar $w={15}>
          <ScrollArrow aria-label="Yukarı"><Triangle /></ScrollArrow>
          <ScrollTrack><ScrollGap $size={20} /><ScrollThumb $size={47} /></ScrollTrack>
          <ScrollArrow aria-label="Aşağı"><Triangle down /></ScrollArrow>
        </Scrollbar>
      </Viewport>

      <Taskbar>
        <Weather><Sun /><Stack><span>20°C</span><Muted>Güneşli</Muted></Stack></Weather>
        <Apps>{apps.map(([name, icon, mark]) => <AppButton key={name} aria-label={name} $mark={mark}>{icon}</AppButton>)}</Apps>
        <Tray>
          <IconButton $w={24} aria-label="Gizli simgeler"><svg width="11" height="7"><path d="M.5 6l5-5 5 5" fill="none" stroke="#fff" strokeWidth="1.500" /></svg></IconButton>
          <IconButton $w={40} aria-label="Ağ"><NetIcon /></IconButton>
          <IconButton $w={16} aria-label="Ses"><VolumeIcon /></IconButton>
          <Clock><span>14:48</span><span>20.10.2024</span></Clock>
          <IconButton $w={17} aria-label="Bildirimler" $color="#f2bdf2"><MdNotifications size={19} /></IconButton>
        </Tray>
      </Taskbar>
    </Screen>
  );
}
